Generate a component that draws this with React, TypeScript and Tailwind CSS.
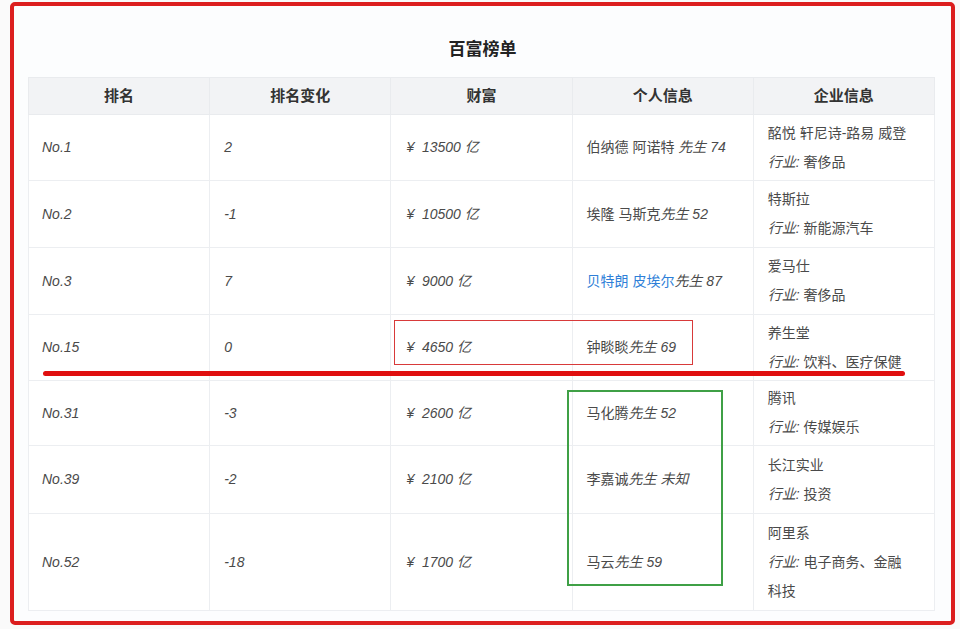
import React from "react";

type Row = {
  rank: string;
  change: string;
  wealth: string;
  name: string;
  nameBlue?: boolean;
  tail: string;
  company: string[];
  industry: string;
  height: string;
};

const rows: Row[] = [
  { rank: "No.1", change: "2", wealth: "13500", name: "伯纳德 阿诺特 ", tail: "先生 74", company: ["酩悦 轩尼诗-路易 威登"], industry: "奢侈品", height: "h-[66px]" },
  { rank: "No.2", change: "-1", wealth: "10500", name: "埃隆 马斯克", tail: "先生 52", company: ["特斯拉"], industry: "新能源汽车", height: "h-[67px]" },
  { rank: "No.3", change: "7", wealth: "9000", name: "贝特朗 皮埃尔", nameBlue: true, tail: "先生 87", company: ["爱马仕"], industry: "奢侈品", height: "h-[67px]" },
  { rank: "No.15", change: "0", wealth: "4650", name: "钟睒睒", tail: "先生 69", company: ["养生堂"], industry: "饮料、医疗保健", height: "h-[66px]" },
  { rank: "No.31", change: "-3", wealth: "2600", name: "马化腾", tail: "先生 52", company: ["腾讯"], industry: "传媒娱乐", height: "h-[65px]" },
  { rank: "No.39", change: "-2", wealth: "2100", name: "李嘉诚", tail: "先生 未知", company: ["长江实业"], industry: "投资", height: "h-[68px]" },
  { rank: "No.52", change: "-18", wealth: "1700", name: "马云", tail: "先生 59", company: ["阿里系"], industry: "电子商务、金融", height: "h-[97px]" },
];

const headers = ["排名", "排名变化", "财富", "个人信息", "企业信息"];

export default function App() {
  return (
    <div className="w-[960px] h-[629px] bg-[#fafafa] pl-[10px] pt-[2px] font-['Liberation_Sans','Noto_Sans_CJK_SC',sans-serif]">
      <div className="relative w-[945px] h-[623px] border-4 border-[#dc1f1f] rounded-[5px] bg-[#fcfdfe] px-[14px]">
        <h1 className="pt-[32px] h-[71px] text-center text-[17px] leading-[24px] font-bold text-[#222]">
          百富榜单
        </h1>

        <table className="w-[907px] table-fixed border-collapse text-[14px] text-[#4a4a4a]">
          <thead>
            <tr className="h-[37px] bg-[#f2f3f5]">
              {headers.map((h) => (
                <th
                  key={h}
                  className="border border-[#e9ebee] font-bold text-[15px] text-[#333] text-center"
                >
                  {h}
                </th>
              ))}
            </tr>
          </thead>
          <tbody>
            {rows.map((r) => (
              <tr key={r.rank} className={`${r.height} bg-white`}>
                <td className="border border-[#eceef1] pl-[13px] italic">{r.rank}</td>
                <td className="border border-[#eceef1] pl-[14px] italic">{r.change}</td>
                <td className="border border-[#eceef1] pl-[15px] italic">
                  ¥&nbsp; {r.wealth} 亿
                </td>
                <td className="border border-[#eceef1] pl-[14px]">
                  <span className={r.nameBlue ? "text-[#2f7fd8]" : ""}>{r.name}</span>
                  <i>{r.tail}</i>
                </td>
                <td className="border border-[#eceef1] pl-[14px] pr-[10px] leading-[29px]">
                  {r.company.map((c) => (
                    <div key={c}>{c}</div>
                  ))}
                  {r.rank === "No.52" ? (
                    <>
                      <div>
                        <i>行业:</i> {r.industry}
                      </div>
                      <div>科技</div>
                    </>
                  ) : (
                    <div>
                      <i>行业:</i> {r.industry}
                    </div>
                  )}
                </td>
              </tr>
            ))}
          </tbody>
        </table>

        {/* annotations drawn over the table */}
        <div className="absolute left-[380px] top-[314px] w-[299px] h-[45px] border-[1.5px] border-[#d83a3a]" />
        <div className="absolute left-[29px] top-[365px] w-[862px] h-[5px] rounded-full bg-[#e00f0f]" />
        <div className="absolute left-[553px] top-[384px] w-[156px] h-[196px] border-2 border-[#3fa046]" />
      </div>
    </div>
  );
}
